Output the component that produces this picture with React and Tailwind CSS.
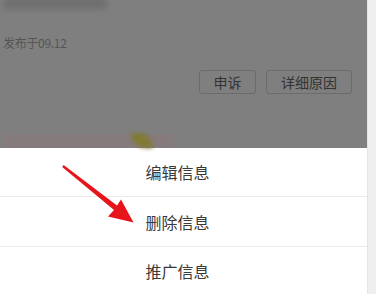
import React from 'react';

const font = { fontFamily: '"Noto Sans CJK SC", "Noto Sans", sans-serif' };

const App = () => {
  return (
    <div className="relative flex w-[376px] h-[294px] overflow-hidden bg-white" style={font}>
      <div className="flex flex-col w-[367px]">
        {/* dimmed page behind the sheet */}
        <div className="relative flex flex-col h-[148px] bg-[#7f7f7f] px-[3px]">
          <div className="mt-[-2px] h-[11px] w-[104px] rounded bg-[#6e6e6e] blur-[3px]"></div>
          <div className="mt-[26px] text-[12px] leading-[16px] text-[#555] tracking-[-0.3px]">发布于09.12</div>
          <div className="flex justify-end gap-[10px] mt-[19px] pr-[12px]">
            <button className="w-[57px] h-[24px] rounded-[3px] border border-[#6c6c6c] text-[14px] text-[#333] leading-none">申诉</button>
            <button className="w-[86px] h-[24px] rounded-[3px] border border-[#6c6c6c] text-[14px] text-[#333] leading-none">详细原因</button>
          </div>
          <div className="relative mt-auto h-[14px] w-[170px] bg-[#867b7c]">
            <div className="absolute left-[128px] top-[-1px] h-[15px] w-[22px] rounded-tr-full rounded-bl-full bg-[#817a34] blur-[2px]"></div>
          </div>
        </div>
        {/* action sheet */}
        <div className="flex flex-col bg-white text-[16px] text-[#3a3a3a]">
          <div className="h-[49px] flex items-center justify-center pr-[12px] border-b border-[#ececec]">编辑信息</div>
          <div className="h-[50px] flex items-center justify-center pr-[12px] border-b border-[#ececec]">删除信息</div>
          <div className="h-[47px] flex items-center justify-center pr-[12px]">推广信息</div>
        </div>
      </div>
      <div className="w-[9px] bg-[#efefef] border-l border-[#e4e4e4]"></div>

      {/* red annotation arrow */}
      <svg className="absolute left-0 top-0 pointer-events-none" width="376" height="294" viewBox="0 0 376 294">
        <polygon
          points="63.6,165 117,205.5 121,199.5 133.5,222.5 108,216.5 114,210 62.2,167"
          fill="#e8141b"
        />
      </svg>
    </div>
  );
};

export default App;
